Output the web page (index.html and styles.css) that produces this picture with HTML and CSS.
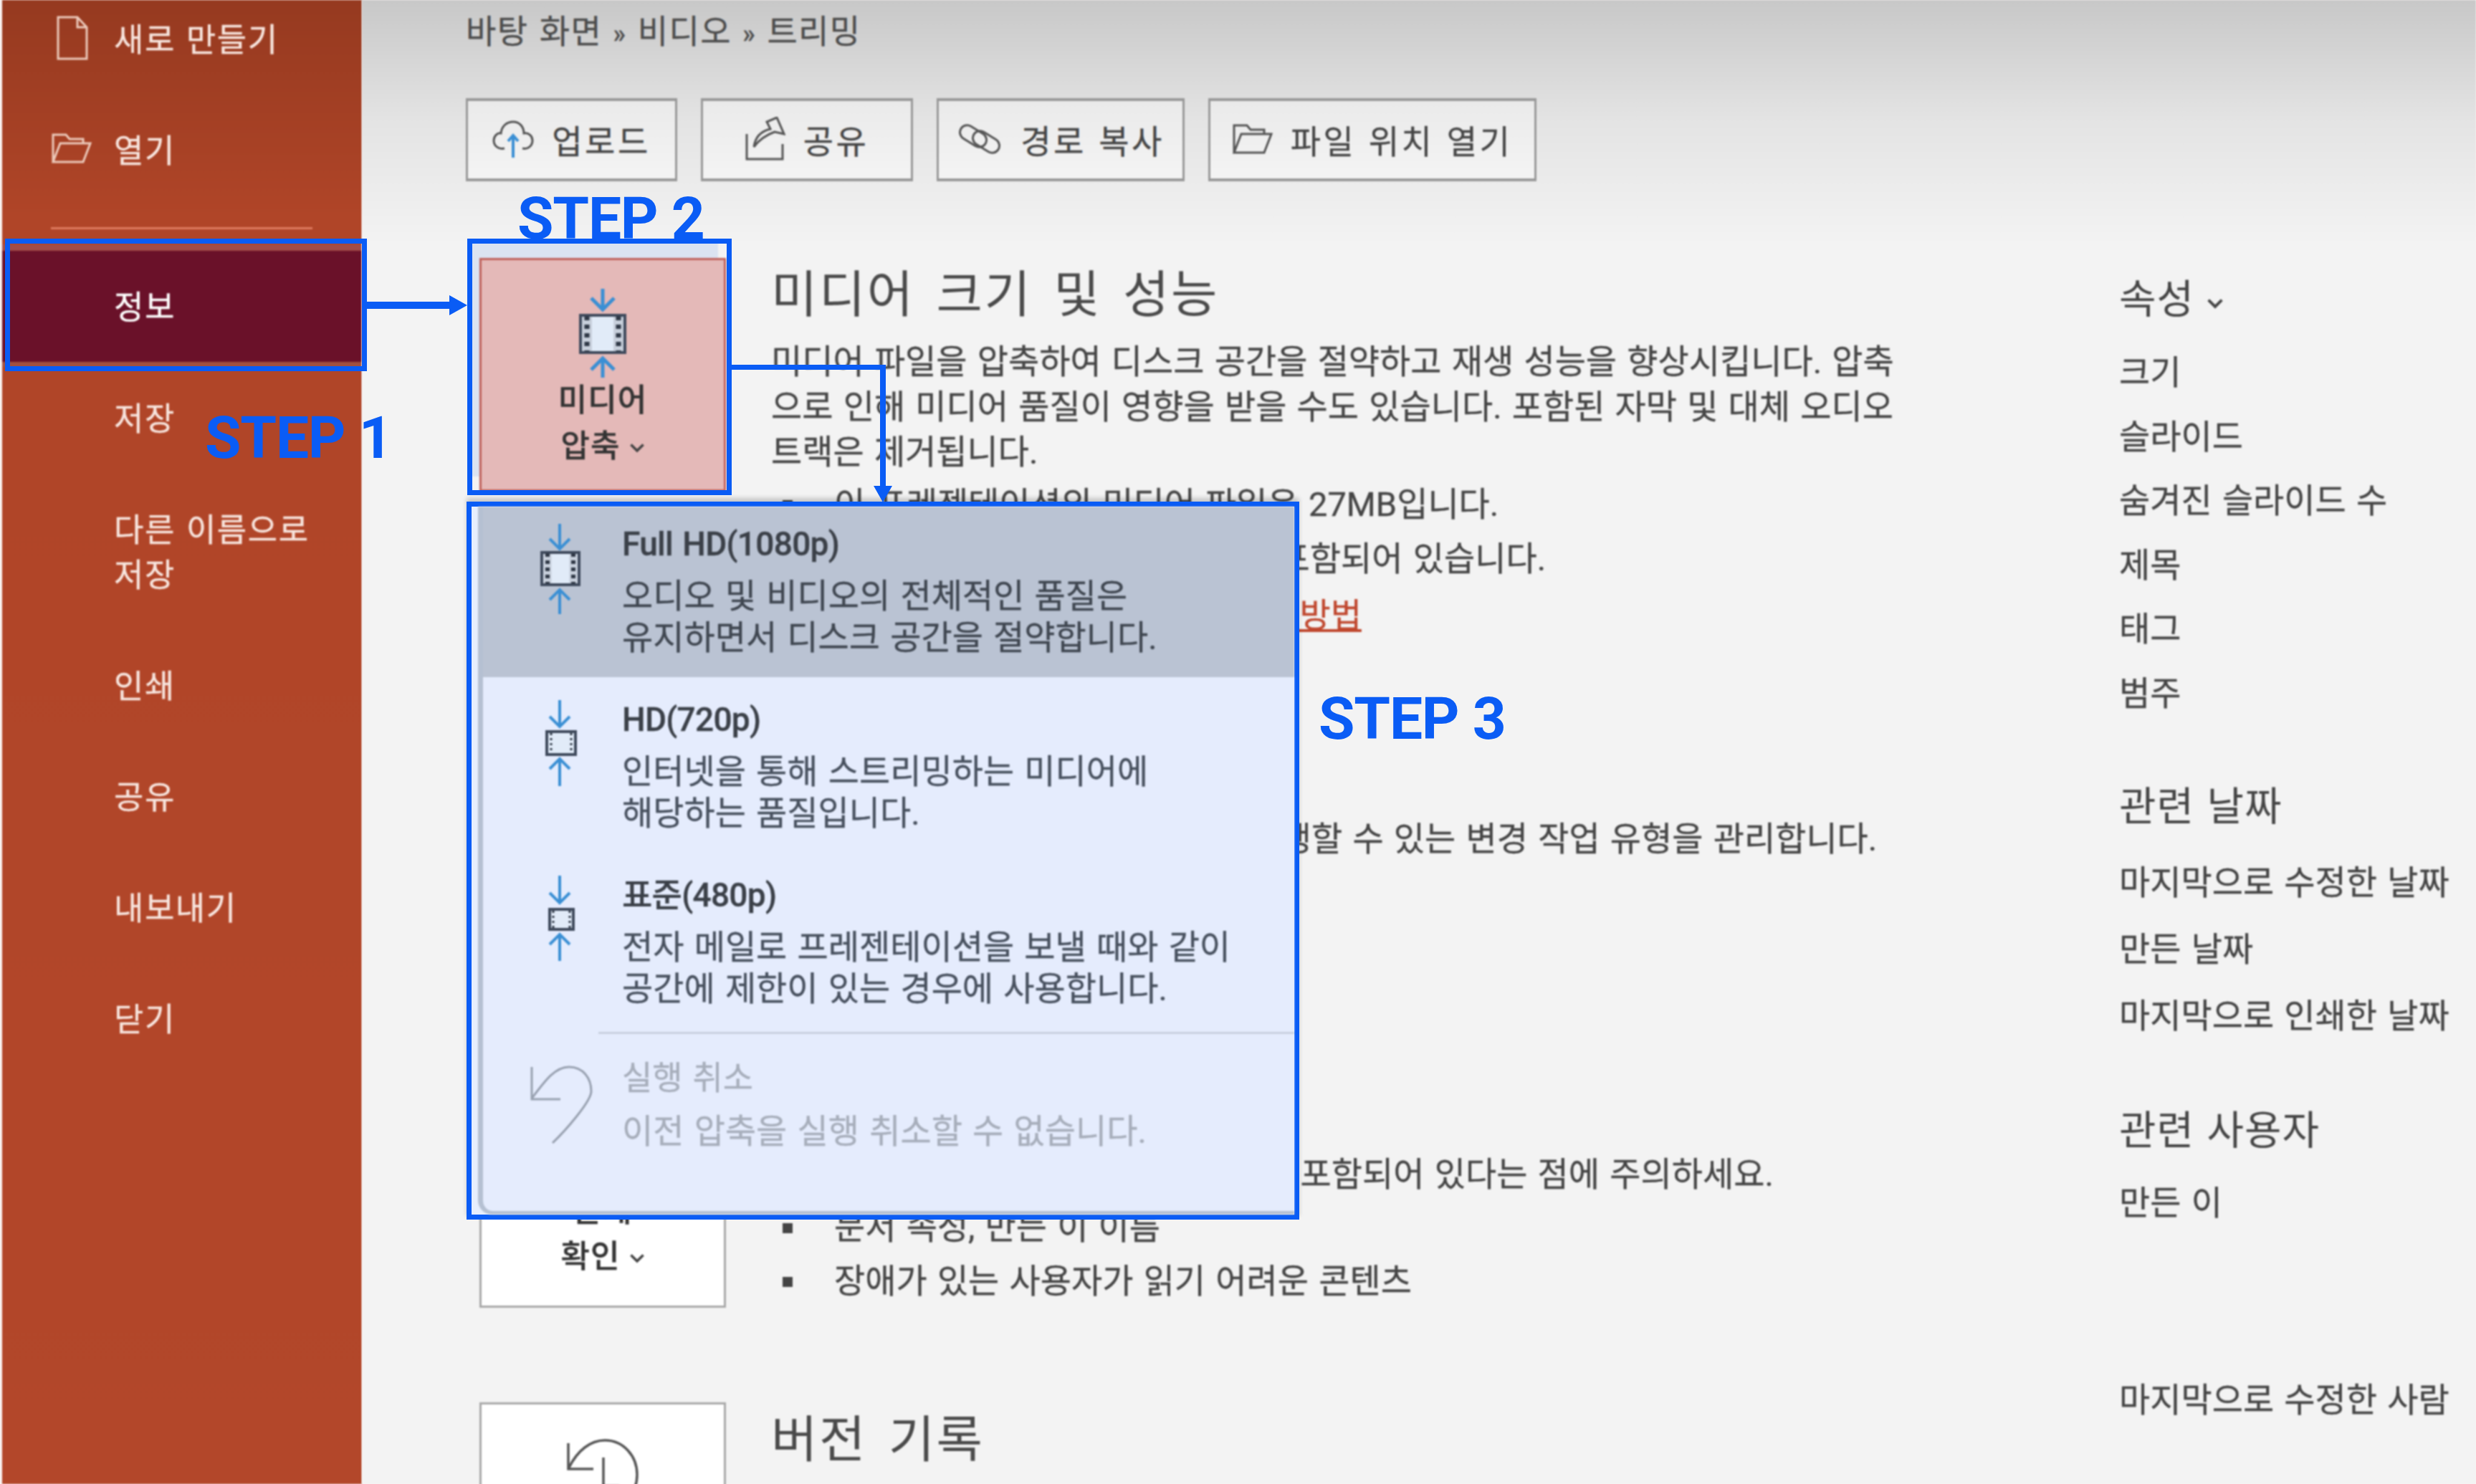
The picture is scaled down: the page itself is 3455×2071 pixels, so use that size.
FILE: index.html
```html
<!DOCTYPE html>
<html lang="ko">
<head>
<meta charset="utf-8">
<title>미디어 압축</title>
<link rel="stylesheet" href="styles.css">
</head>
<body>
<div class="app">
  <aside class="sidebar">
    <nav class="nav">
      <a class="nav-item nav-item--first"><svg class="nav-icon nav-icon--doc" viewBox="0 0 44 62"><path d="M2 2H29L42 16V60H2ZM29 2V16H42"/></svg>새로 만들기</a>
      <a class="nav-item"><svg class="nav-icon nav-icon--open" viewBox="0 0 56 42"><path d="M2 40V2H20L25 8H44V14M2 40L12 14H54L44 40Z"/></svg>열기</a>
      <div class="nav-rule"></div>
      <a class="nav-item nav-item--active">정보</a>
      <a class="nav-item">저장</a>
      <a class="nav-item nav-item--tall">다른 이름으로<br>저장</a>
      <a class="nav-item">인쇄</a>
      <a class="nav-item">공유</a>
      <a class="nav-item">내보내기</a>
      <a class="nav-item">닫기</a>
    </nav>
  </aside>

  <main class="main">
    <div class="crumbs">바탕 화면 <span class="crumb-sep">»</span> 비디오 <span class="crumb-sep">»</span> 트리밍</div>
    <div class="toolbar">
      <button class="tool tool--upload"><svg class="tool-icon" viewBox="0 0 58 52"><path class="ink" d="M17 39C8 41 2 35 2 28C2 22 7 17 12 18C13 8 20 2 29 2C38 2 44 9 44 18C51 17 56 22 56 28C56 35 50 41 42 39"/><path class="blue" d="M29 52V21M22 29L29 21L36 29"/></svg>업로드</button>
      <button class="tool tool--share"><svg class="tool-icon" viewBox="0 0 56 62"><path class="ink" d="M2 24V59H52V38"/><path class="ink" d="M12 42C14 27 22 20 35 17L30 7L44 1L54 24L41 21C30 25 20 31 12 42Z"/></svg>공유</button>
      <button class="tool tool--path"><svg class="tool-icon" viewBox="0 0 64 42"><g class="ink"><rect x="3" y="7" width="40" height="20" rx="10" transform="rotate(32 23 17)"/><rect x="21" y="15" width="40" height="20" rx="10" transform="rotate(32 41 25)"/></g></svg>경로 복사</button>
      <button class="tool tool--folder"><svg class="tool-icon" viewBox="0 0 56 42"><path class="ink" d="M2 40V2H20L25 8H44V14M2 40L12 14H54L44 40Z"/></svg>파일 위치 열기</button>
    </div>

    <div class="body">
      <div class="sections">
        <section class="section section--media">
          <button class="action action--media">
            <svg class="action-icon" viewBox="0 0 66 124"><path class="blue blue--thick" d="M33 0V29M17 13L33 29L49 13"/><rect class="film" x="2" y="37" width="62" height="52"/><path class="strip" d="M11 39V87M55 39V87"/><path class="holes" d="M11 38V88M55 38V88"/><path class="blue blue--thick" d="M33 124V97M17 113L33 97L49 113"/></svg>
            <span class="action-label">미디어<br>압축<svg class="chev" viewBox="0 0 14 9"><path d="M1 1L7 7L13 1"/></svg></span>
          </button>
          <div class="copy">
            <h2 class="title">미디어 크기 및 성능</h2>
            <p class="para">미디어 파일을 압축하여 디스크 공간을 절약하고 재생 성능을 향상시킵니다. 압축<br>으로 인해 미디어 품질이 영향을 받을 수도 있습니다. 포함된 자막 및 대체 오디오<br>트랙은 제거됩니다.</p>
            <ul class="bullets">
              <li>이 프레젠테이션의 미디어 파일은 27MB입니다.</li>
              <li class="bullet--shift">이 프레젠테이션에는 미디어가 포함되어 있습니다.</li>
            </ul>
            <a class="link">미디어 파일 재생 성능을 향상시키는 방법</a>
          </div>
        </section>

        <section class="section section--protect">
          <button class="action"><span class="action-label">프레젠테이션<br>보호</span></button>
          <div class="copy">
            <h2 class="title">프레젠테이션 보호</h2>
            <p class="para para--protect">사용자가 이 프레젠테이션에서 수행할 수 있는 변경 작업 유형을 관리합니다.</p>
          </div>
        </section>

        <section class="section section--inspect">
          <button class="action action--inspect"><span class="action-label">문제<br>확인<svg class="chev" viewBox="0 0 14 9"><path d="M1 1L7 7L13 1"/></svg></span></button>
          <div class="copy">
            <h2 class="title">프레젠테이션 검사</h2>
            <p class="para para--inspect">이 파일을 게시하기 전에 다음 항목이 포함되어 있다는 점에 주의하세요.</p>
            <ul class="bullets bullets--tight">
              <li>문서 속성, 만든 이 이름</li>
              <li>장애가 있는 사용자가 읽기 어려운 콘텐츠</li>
            </ul>
          </div>
        </section>

        <section class="section section--history">
          <button class="action action--history"><svg class="history-icon" viewBox="0 0 102 100"><path d="M3 6V42H38M4 40C16 16 34 2 54 2C80 2 99 24 99 50C99 76 80 98 54 98"/><path d="M52 26V66H74"/></svg></button>
          <div class="copy">
            <h2 class="title title--history">버전 기록</h2>
          </div>
        </section>
      </div>

      <div class="props">
        <h3 class="props-head">속성<svg class="chev chev--props" viewBox="0 0 14 9"><path d="M1 1L7 7L13 1"/></svg></h3>
        <div class="prop">크기</div>
        <div class="prop">슬라이드</div>
        <div class="prop">숨겨진 슬라이드 수</div>
        <div class="prop">제목</div>
        <div class="prop">태그</div>
        <div class="prop">범주</div>

        <h3 class="props-head props-head--group">관련 날짜</h3>
        <div class="prop prop--date">마지막으로 수정한 날짜</div>
        <div class="prop prop--date">만든 날짜</div>
        <div class="prop prop--date">마지막으로 인쇄한 날짜</div>

        <h3 class="props-head props-head--group props-head--people">관련 사용자</h3>
        <div class="prop prop--date">만든 이</div>
        <div class="prop prop--date prop--last">마지막으로 수정한 사람</div>
      </div>
    </div>
  </main>
</div>

<div class="menu">
  <div class="menu-panel">
    <div class="opt opt--selected">
      <svg class="opt-icon" viewBox="0 0 120 126"><path class="blue" d="M60 0V35M46 21L60 35L74 21"/><rect class="film" x="35" y="40" width="52" height="45"/><path class="strip strip--mid" d="M43 42V83M79 42V83"/><path class="holes holes--mid" d="M43 41V84M79 41V84"/><path class="blue" d="M60 126V92M46 106L60 92L74 106"/></svg>
      <div class="opt-body">
        <div class="opt-title">Full HD(1080p)</div>
        <div class="opt-desc">오디오 및 비디오의 전체적인 품질은<br>유지하면서 디스크 공간을 절약합니다.</div>
      </div>
    </div>
    <div class="opt">
      <svg class="opt-icon opt-icon--low" viewBox="0 0 120 126"><path class="blue" d="M60 0V37M46 23L60 37L74 23"/><rect class="film" x="42" y="44" width="40" height="32"/><path class="holes holes--small" d="M48 46V74M76 46V74"/><path class="blue" d="M60 120V82M46 96L60 82L74 96"/></svg>
      <div class="opt-body">
        <div class="opt-title">HD(720p)</div>
        <div class="opt-desc">인터넷을 통해 스트리밍하는 미디어에<br>해당하는 품질입니다.</div>
      </div>
    </div>
    <div class="opt opt--last">
      <svg class="opt-icon opt-icon--low" viewBox="0 0 120 126"><path class="blue" d="M60 0V38M46 24L60 38L74 24"/><rect class="film" x="46" y="47" width="33" height="28"/><path class="holes holes--small" d="M51 49V73M74 49V73"/><path class="blue" d="M60 119V82M46 96L60 82L74 96"/></svg>
      <div class="opt-body">
        <div class="opt-title">표준(480p)</div>
        <div class="opt-desc">전자 메일로 프레젠테이션을 보낼 때와 같이<br>공간에 제한이 있는 경우에 사용합니다.</div>
      </div>
    </div>
    <div class="menu-rule"></div>
    <div class="opt opt--disabled">
      <svg class="undo-icon" viewBox="0 0 87 109"><path d="M2 2V47H42M2 46C20 22 34 2 54 2C74 2 85 18 85 36C85 50 48 92 31 108"/></svg>
      <div class="opt-body">
        <div class="opt-title opt-title--plain">실행 취소</div>
        <div class="opt-desc opt-desc--disabled">이전 압축을 실행 취소할 수 없습니다.</div>
      </div>
    </div>
  </div>
</div>

<div class="mark mark--info"></div>
<div class="mark mark--media"></div>
<div class="step step--1">STEP 1</div>
<div class="step step--2">STEP 2</div>
<div class="step step--3">STEP 3</div>
<svg class="arrows" viewBox="0 0 3455 2071">
  <path d="M512 421H627V412L652 426L627 440V431H512Z"/>
  <path d="M1021 509H1236V678H1245L1232 701L1219 678H1228V516H1021Z"/>
</svg>
</body>
</html>
```
FILE: styles.css
```css
* { box-sizing: border-box; }
html, body { margin: 0; padding: 0; }
body {
  position: relative;
  width: 3455px;
  height: 2071px;
  overflow: hidden;
  background: #f3f3f3;
  color: #454545;
  font-family: Roboto, "Noto Sans CJK KR", sans-serif;
  font-size: 47px;
  word-spacing: 2.5px;
  -webkit-text-stroke: 0.3px currentColor;
}
svg { display: block; fill: none; }
button { font: inherit; color: inherit; word-spacing: inherit; padding: 0; cursor: default; }
h2, h3, p, ul { margin: 0; padding: 0; font-weight: 400; }

.app { display: flex; height: 2071px; padding-left: 3px; background: #fbf4f2; }

/* sidebar */
.sidebar {
  flex: 0 0 502px;
  background: linear-gradient(#963a20 0, #b04528 300px, #b3472a 100%);
  color: #f8e6df;
  font-size: 45px;
  filter: blur(0.9px);
}
.nav { display: flex; flex-direction: column; margin-top: -24px; }
.nav-item {
  position: relative;
  display: flex;
  align-items: center;
  height: 155px;
  padding: 6px 0 0 156px;
  line-height: 63px;
  letter-spacing: 1.5px;
}
.nav-item--tall { height: 218px; }
.nav-item--active {
  padding-top: 3px;
  background: #6a1129;
  box-shadow: 0 -9px 0 #a24c48, 0 7px 0 #a2503f;
  color: #fff;
}
.nav-icon { position: absolute; stroke: #ecc9ba; stroke-width: 3; }
.nav-icon--doc { left: 76px; top: 46px; width: 44px; height: 62px; }
.nav-icon--open { left: 69px; top: 55px; width: 56px; height: 42px; }
.nav-rule { height: 3px; margin: 31px 69px 30px 68px; background: #de7a5f; }

/* main */
.main {
  flex: 1;
  min-width: 0;
  padding: 14px 0 0 145px;
  background: linear-gradient(#c8c8c8 0, #e4e4e4 170px, #f3f3f3 340px);
  filter: blur(0.9px);
}
.crumbs { height: 60px; line-height: 60px; font-size: 46px; letter-spacing: 1.4px; color: #4d4d4d; }
.crumb-sep { font-size: 36px; font-weight: 500; }
.toolbar { display: flex; gap: 33px; margin-top: 63px; }
.tool {
  display: flex;
  align-items: center;
  justify-content: center;
  gap: 25px;
  height: 116px;
  padding-bottom: 3px;
  border: 3px solid #999;
  border-top-width: 4px;
  border-bottom-width: 4px;
  background: linear-gradient(#eaeaea, #f4f4f4);
  font-size: 46px;
  letter-spacing: 3.5px;
}
.tool--upload { width: 295px; }
.tool--share { width: 296px; }
.tool--path { width: 346px; }
.tool--folder { width: 458px; }
.tool-icon { flex: none; }
.tool--upload .tool-icon { width: 58px; height: 52px; }
.tool--share .tool-icon { width: 56px; height: 62px; }
.tool--path .tool-icon { width: 64px; height: 42px; }
.tool--folder .tool-icon { width: 56px; height: 42px; }
.ink { stroke: #555; stroke-width: 3; }
.blue { stroke: #3a8fd4; stroke-width: 4; }
.blue--thick { stroke-width: 5; }
.film { fill: #e1ebf8; stroke: #3f4a5c; stroke-width: 4; }
.strip { stroke: #c7cfdb; stroke-width: 14; }
.strip--mid { stroke-width: 11; }
.holes { stroke: #2f3846; stroke-width: 7; stroke-dasharray: 6 6; }
.holes--mid { stroke-width: 6; stroke-dasharray: 5 5; }
.holes--small { stroke-width: 3; stroke-dasharray: 3 4; }

.body { display: flex; }
.sections { flex: 0 0 2307px; }
.props { padding-top: 120px; }

.section { display: flex; gap: 63px; padding-left: 18px; }
.section--media { margin-top: 107px; }
.section--protect { margin-top: 136px; }
.section--inspect { margin-top: 137px; }
.section--history { margin-top: 132px; }

.action {
  flex: 0 0 344px;
  display: flex;
  flex-direction: column;
  align-items: center;
  justify-content: flex-end;
  height: 331px;
  padding-bottom: 36px;
  margin-left: 1px;
  border: 3px solid #a9a9a9;
  background: #fff;
  font-size: 44px;
  font-weight: 500;
  color: #333;
}
.action--media {
  height: 326px;
  padding-bottom: 28px;
  justify-content: flex-start;
  padding-top: 40px;
  background: #e4b9b8;
  border-color: #c0625c;
  box-shadow: -11px -21px 0 #dbe3f1;
}
.action-icon { width: 66px; height: 124px; }
.action-label { display: block; line-height: 64px; text-align: center; letter-spacing: 1px; }
.chev { display: inline-block; width: 20px; height: 13px; margin-left: 14px; vertical-align: 6px; stroke: #444; stroke-width: 2.5; }
.chev--props { width: 22px; height: 14px; margin-left: 18px; vertical-align: 6px; }
.action--history { height: 200px; justify-content: flex-start; padding: 48px 0 0; }
.history-icon { width: 102px; height: 100px; stroke: #555; stroke-width: 3.5; }

.copy { flex: 1; min-width: 0; white-space: nowrap; }
.title { height: 94px; line-height: 104px; font-size: 70px; font-weight: 400; letter-spacing: 2.5px; word-spacing: 10px; -webkit-text-stroke: 0; color: #4a4a4a; }
.title--history { line-height: 106px; }
.para { margin-top: 19px; line-height: 63px; font-size: 47px; }
.para--protect { padding-left: 63px; }
.para--inspect { margin-left: 5px; }
.bullets { list-style: none; margin-top: 4px; }
.bullets li { position: relative; height: 76px; line-height: 76px; padding-left: 88px; }
.bullets li.bullet--shift { padding-left: 104px; }
.bullets li::before {
  content: "";
  position: absolute;
  left: 16px;
  top: 32px;
  width: 14px;
  height: 14px;
  background: #444;
}
.bullets--tight { margin-top: 5px; }
.bullets--tight li { height: 75px; line-height: 75px; }
.link { display: block; margin-top: 9px; padding-left: 18px; line-height: 63px; color: #c0472e; text-decoration: underline; }

/* properties */
.props-head { height: 90px; line-height: 90px; font-size: 56px; letter-spacing: 1px; white-space: nowrap; -webkit-text-stroke: 0; }
.props-head--group { margin-top: 69px; margin-bottom: 14px; }
.props-head--people { margin-bottom: 9px; }
.props-head + .prop { margin-top: 12px; }
.props-head--group + .prop { margin-top: 0; }
.prop { height: 89.5px; line-height: 89.5px; white-space: nowrap; font-size: 47px; }
.prop--date { height: 93px; line-height: 93px; }
.prop--last { margin-top: 182px; }

/* dropdown */
.menu {
  position: absolute;
  left: 651px;
  top: 700px;
  width: 1162px;
  height: 1002px;
  border: 7px solid #0a5cf5;
  background: #e7eefd;
  box-shadow: 0 -5px 6px rgba(0, 0, 0, 0.18);
}
.menu-panel {
  height: 100%;
  margin-left: 9px;
  border-left: 7px solid #b5c0d2;
  border-bottom: 5px solid #b5c0d2;
  border-bottom-left-radius: 20px;
  background: #e5ecfd;
  filter: blur(0.9px);
}
.opt { display: flex; height: 245px; }
.opt--selected { height: 238px; background: #bac3d3; }
.opt--last { height: 250px; }
.opt-icon { flex: 0 0 120px; height: 126px; margin: 24px 0 0 47px; }
.opt-icon--low { margin-top: 32px; }
.opt-body { margin-left: 27px; padding-top: 25px; white-space: nowrap; color: #47505e; }
.opt--selected .opt-body { padding-top: 18px; color: #3f4650; }
.opt-title { height: 68px; line-height: 68px; font-size: 46px; letter-spacing: -0.7px; font-weight: 500; color: #3b4048; }
.opt-title--plain { font-weight: 400; color: #a7aebb; letter-spacing: 0; }
.opt-desc { margin-top: 10px; line-height: 58px; font-size: 47px; }
.opt-desc--disabled { margin-top: 12px; color: #a7aebb; }
.menu-rule { height: 3px; margin-left: 161px; background: #c9d1e0; }
.opt--disabled { height: auto; }
.opt--disabled .opt-body { padding-top: 27px; margin-left: 41px; color: #a7aebb; }
.undo-icon { flex: 0 0 87px; height: 109px; margin: 44px 0 0 66px; stroke: #98a1b0; stroke-width: 3; }

/* annotations */
.mark { position: absolute; border: 7px solid #0a5cf5; }
.mark--info { left: 7px; top: 333px; width: 505px; height: 185px; }
.mark--media { left: 652px; top: 333px; width: 369px; height: 358px; }
.step {
  position: absolute;
  color: #0a5cf5;
  font-size: 82px;
  font-weight: 700;
  line-height: 80px;
  letter-spacing: -1.2px;
  word-spacing: 0;
  white-space: nowrap;
  -webkit-text-stroke: 0;
}
.step--1 { left: 286px; top: 571px; }
.step--2 { left: 722px; top: 265px; }
.step--3 { left: 1840px; top: 963px; }
.arrows { position: absolute; left: 0; top: 0; width: 3455px; height: 2071px; pointer-events: none; }
.arrows path { fill: #0a5cf5; }
```
